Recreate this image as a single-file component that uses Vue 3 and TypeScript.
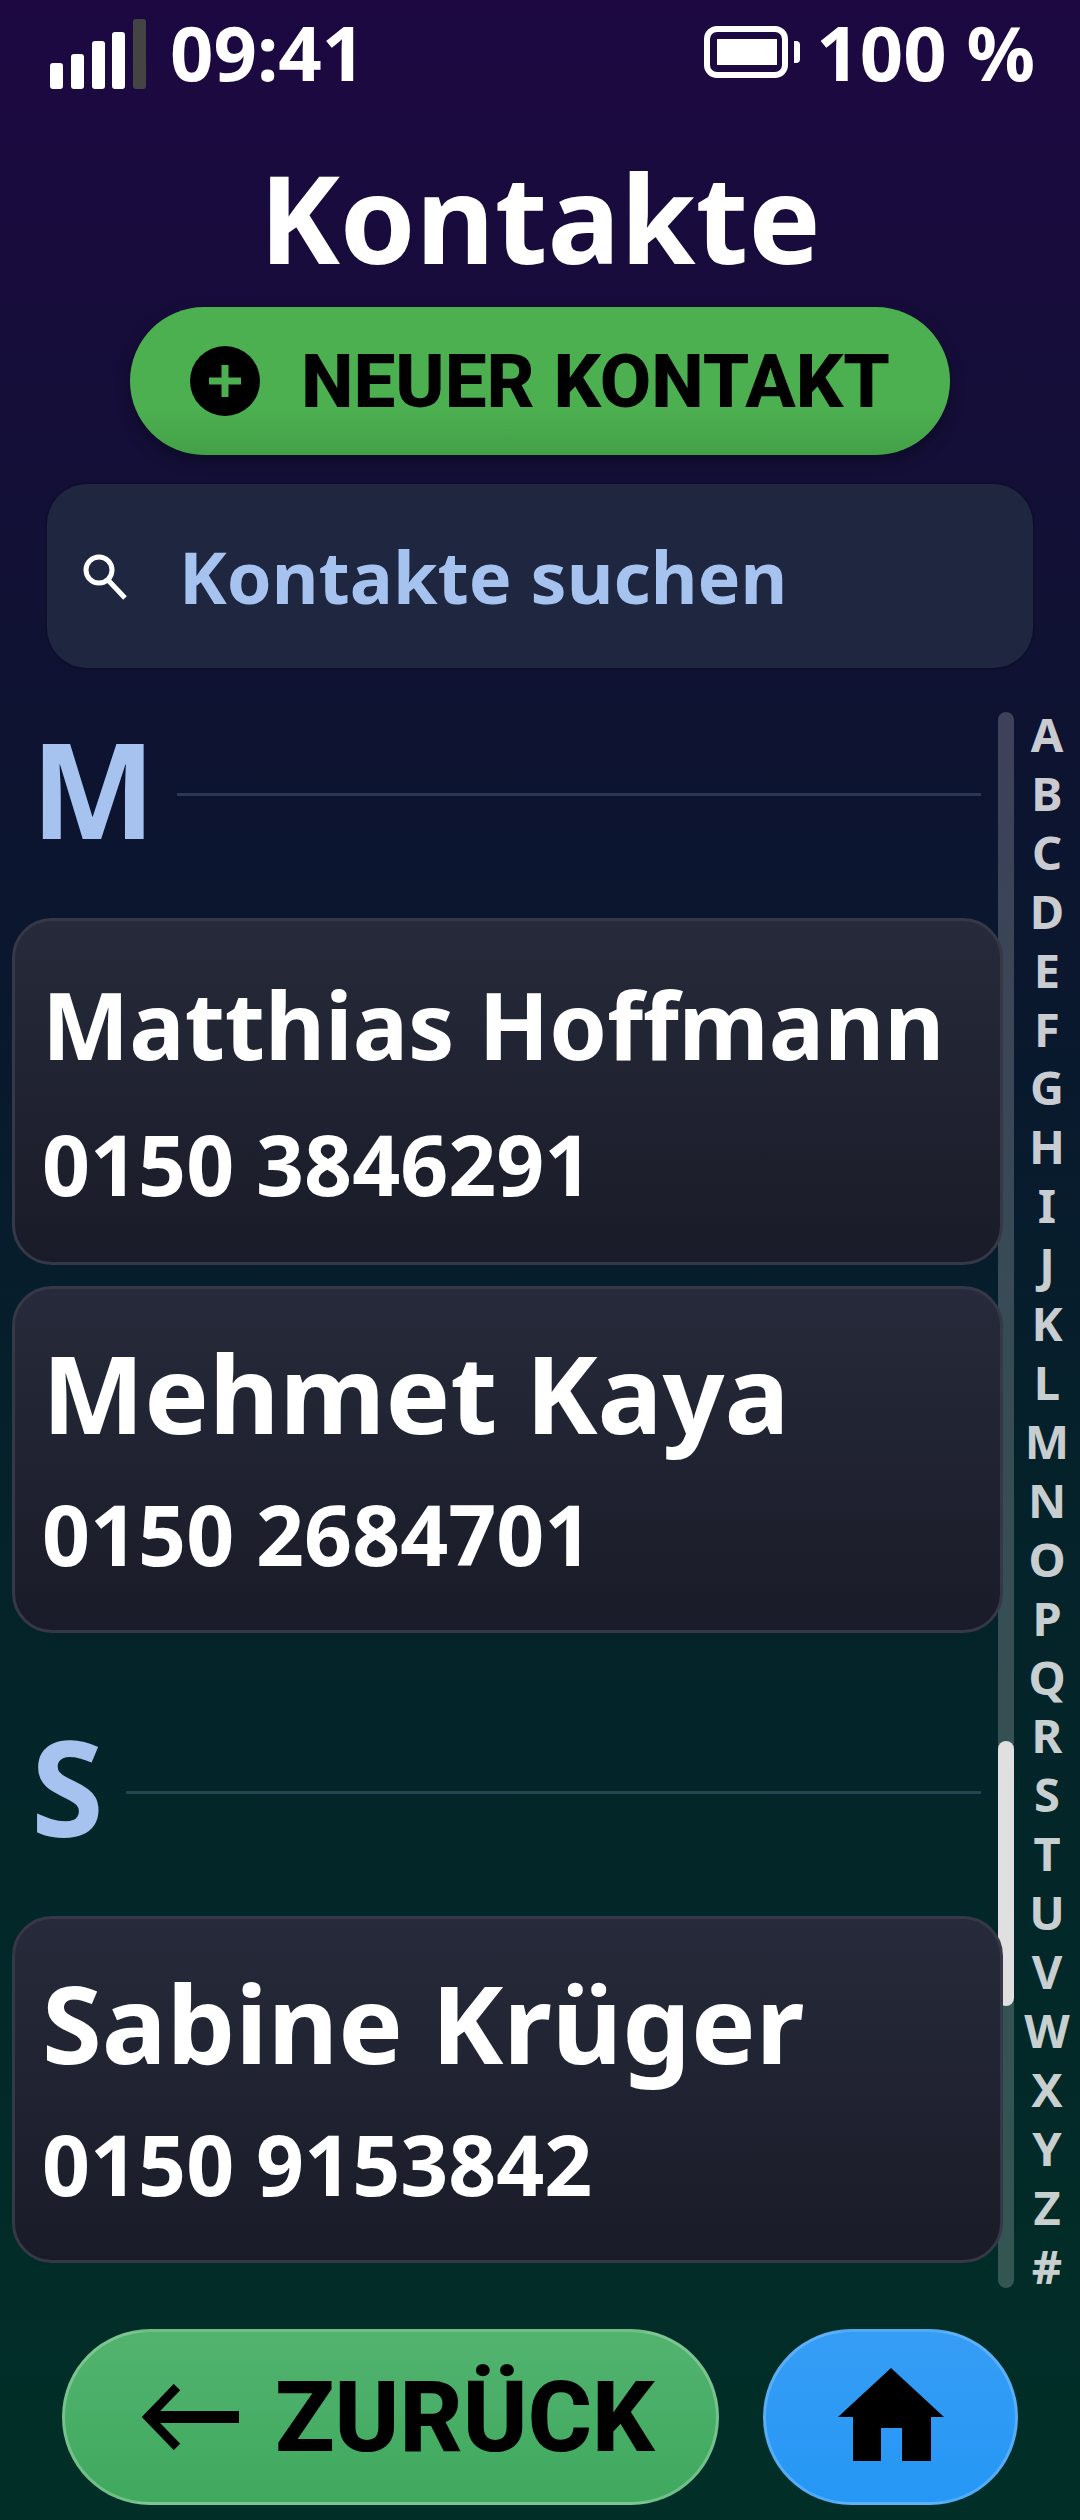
<script setup lang="ts">
interface Contact {
  name: string
  phone: string
  size: string
}
interface Section {
  letter: string
  contacts: Contact[]
}

const sections: Section[] = [
  {
    letter: 'M',
    contacts: [
      { name: 'Matthias Hoffmann', phone: '0150 3846291', size: 'small' },
      { name: 'Mehmet Kaya', phone: '0150 2684701', size: 'large' },
    ],
  },
  {
    letter: 'S',
    contacts: [{ name: 'Sabine Krüger', phone: '0150 9153842', size: 'large' }],
  },
]

const letters = 'ABCDEFGHIJKLMNOPQRSTUVWXYZ#'.split('')
</script>

<template>
  <div class="screen">
    <header class="status">
      <div class="status-side">
        <svg class="signal" width="96" height="70" viewBox="0 0 96 70">
          <rect x="0" y="44" width="13" height="26" rx="3" fill="#fff" />
          <rect x="21" y="35" width="13" height="35" rx="3" fill="#fff" />
          <rect x="42" y="22" width="13" height="48" rx="3" fill="#fff" />
          <rect x="62" y="13" width="13" height="57" rx="3" fill="#fff" />
          <rect x="83" y="0" width="13" height="70" rx="3" fill="#444" />
        </svg>
        <span class="status-text">09:41</span>
      </div>
      <div class="status-side">
        <svg class="battery" width="96" height="52" viewBox="0 0 96 52">
          <rect x="3" y="3" width="78" height="46" rx="10" fill="none" stroke="#fff" stroke-width="6" />
          <rect x="13" y="13" width="60" height="26" fill="#fff" />
          <path d="M90 15h2a4 4 0 0 1 4 4v14a4 4 0 0 1-4 4h-2z" fill="#fff" />
        </svg>
        <span class="status-text">100 %</span>
      </div>
    </header>

    <h1 class="title">Kontakte</h1>

    <button class="new-btn">
      <svg width="70" height="70" viewBox="0 0 70 70">
        <circle cx="35" cy="35" r="35" fill="#000" />
        <path d="M35 19v32M19 35h32" stroke="#4caf50" stroke-width="7" />
      </svg>
      <span>NEUER KONTAKT</span>
    </button>

    <div class="search">
      <svg class="search-icon" width="48" height="48" viewBox="0 0 48 48">
        <circle cx="18" cy="18" r="13" fill="none" stroke="#fff" stroke-width="5" />
        <path d="M27 28l17 18" stroke="#fff" stroke-width="5" fill="none" />
      </svg>
      <span>Kontakte suchen</span>
    </div>

    <main class="list-wrap">
      <div class="track"><div class="thumb"></div></div>
      <div class="list">
        <section v-for="s in sections" :key="s.letter" class="section">
          <div class="section-head">
            <span class="section-letter">{{ s.letter }}</span>
            <span class="section-line"></span>
          </div>
          <article v-for="c in s.contacts" :key="c.name" class="card">
            <div class="name" :class="c.size">{{ c.name }}</div>
            <div class="phone">{{ c.phone }}</div>
          </article>
        </section>
      </div>
      <nav class="alphabet">
        <span v-for="l in letters" :key="l">{{ l }}</span>
      </nav>
    </main>

    <footer class="bottom">
      <button class="back">
        <svg width="98" height="66" viewBox="0 0 98 66">
          <path d="M36 3L7 33l29 30" fill="none" stroke="#000" stroke-width="9" />
          <path d="M8 33h90" stroke="#000" stroke-width="12" />
        </svg>
        <span>ZURÜCK</span>
      </button>
      <button class="home">
        <svg class="home-icon" width="106" height="93" viewBox="0 0 106 93">
          <path d="M53 0L106 49H93V93H64V60H43V93H15V49H0z" fill="#000" />
        </svg>
      </button>
    </footer>
  </div>
</template>

<style>
html,
body {
  margin: 0;
  background: #012e27;
}
</style>

<style scoped>
.screen {
  width: 1080px;
  height: 2520px;
  overflow: hidden;
  box-sizing: border-box;
  display: flex;
  flex-direction: column;
  color: #fff;
  font-family: 'Noto Sans', sans-serif;
  font-weight: 700;
  background: linear-gradient(180deg, #1d0842 0%, #0d1330 30%, #04222a 60%, #012f27 100%);
}

button {
  font-family: Roboto, sans-serif;
  font-weight: 800;
  color: #000;
  cursor: pointer;
}

.status {
  height: 104px;
  flex: none;
  display: flex;
  justify-content: space-between;
  align-items: center;
  padding: 0 45px 0 50px;
}

.status-side {
  display: flex;
  align-items: center;
  gap: 20px;
}

.signal {
  margin-top: 3px;
  margin-right: 4px;
}

.battery {
  margin-right: -4px;
}

.status-text {
  font-size: 76px;
  line-height: 104px;
}

.title {
  margin: 32px 0 8px;
  text-align: center;
  font-size: 121.5px;
  line-height: 163px;
  font-weight: 700;
}

.new-btn {
  align-self: center;
  width: 820px;
  height: 148px;
  flex: none;
  margin-top: 0;
  padding: 0 0 0 60px;
  border: none;
  border-radius: 74px;
  display: flex;
  align-items: center;
  gap: 41px;
  font-size: 74.6px;
  background: linear-gradient(180deg, #4caf50 0%, #4caf50 70%, #43a047 100%);
  box-shadow: 0 6px 16px rgba(0, 0, 0, 0.3);
}

.search {
  margin: 29px 47px 0;
  height: 184px;
  flex: none;
  box-sizing: border-box;
  padding-left: 34px;
  display: flex;
  align-items: center;
  gap: 50px;
  border-radius: 40px;
  background: #1e2640;
  box-shadow: 0 0 0 2px rgba(0, 0, 0, 0.12);
  font-size: 72px;
  color: #a6c3f0;
}

.list-wrap {
  position: relative;
  flex: 1;
  min-height: 0;
  display: flex;
  padding-top: 54px;
}

.track {
  position: absolute;
  left: 998px;
  top: 44px;
  width: 16px;
  height: 1576px;
  border-radius: 8px;
  background: rgba(255, 255, 255, 0.2);
}

.thumb {
  position: absolute;
  left: 0;
  top: 1029px;
  width: 16px;
  height: 265px;
  border-radius: 8px;
  background: #e0e0e0;
}

.list {
  position: relative;
  width: 1003px;
  padding-left: 12px;
  box-sizing: border-box;
}

.section + .section {
  margin-top: 87px;
}

.section-head {
  display: flex;
  align-items: center;
  height: 144px;
  padding-left: 19px;
  padding-right: 22px;
  gap: 22px;
  margin-bottom: 52px;
}

.section-letter {
  margin-top: -12px;
  font-size: 132px;
  line-height: 144px;
  color: #a6c3f0;
}

.section-line {
  flex: 1;
  height: 3px;
  background: rgba(166, 195, 240, 0.2);
}

.card {
  box-sizing: border-box;
  height: 347px;
  padding: 0 27px 23px;
  display: flex;
  flex-direction: column;
  justify-content: center;
  border: 3px solid #363848;
  border-radius: 40px;
  background: linear-gradient(180deg, #272a3a 0%, #191b28 100%);
}

.card + .card {
  margin-top: 21px;
}

.name.small {
  font-size: 92.5px;
  line-height: 167px;
}

.name.large {
  font-size: 108.5px;
  line-height: 171px;
}

.phone {
  font-size: 84px;
  line-height: 112px;
}

.alphabet {
  position: absolute;
  left: 1014px;
  right: 0;
  top: 0;
  padding-top: 37px;
  display: flex;
  flex-direction: column;
  align-items: center;
  font-size: 47px;
  line-height: 58.9px;
  color: rgba(255, 255, 255, 0.8);
}

.bottom {
  flex: none;
  height: 176px;
  margin-bottom: 15px;
  padding: 0 62px;
  display: flex;
  gap: 44px;
}

.back {
  width: 657px;
  height: 176px;
  box-sizing: border-box;
  border-radius: 88px;
  border: 3px solid rgba(255, 255, 255, 0.25);
  background: linear-gradient(180deg, #52b36f 0%, #3fa95e 100%);
  display: flex;
  align-items: center;
  padding: 0 0 0 76px;
  gap: 36px;
  font-size: 98px;
}

.home {
  width: 255px;
  height: 176px;
  box-sizing: border-box;
  border-radius: 88px;
  border: 3px solid rgba(255, 255, 255, 0.2);
  background: linear-gradient(180deg, #369df5 0%, #2597f5 100%);
  display: flex;
  align-items: center;
  justify-content: center;
  padding: 0;
}

.home-icon {
  margin-bottom: 5px;
}
</style>
